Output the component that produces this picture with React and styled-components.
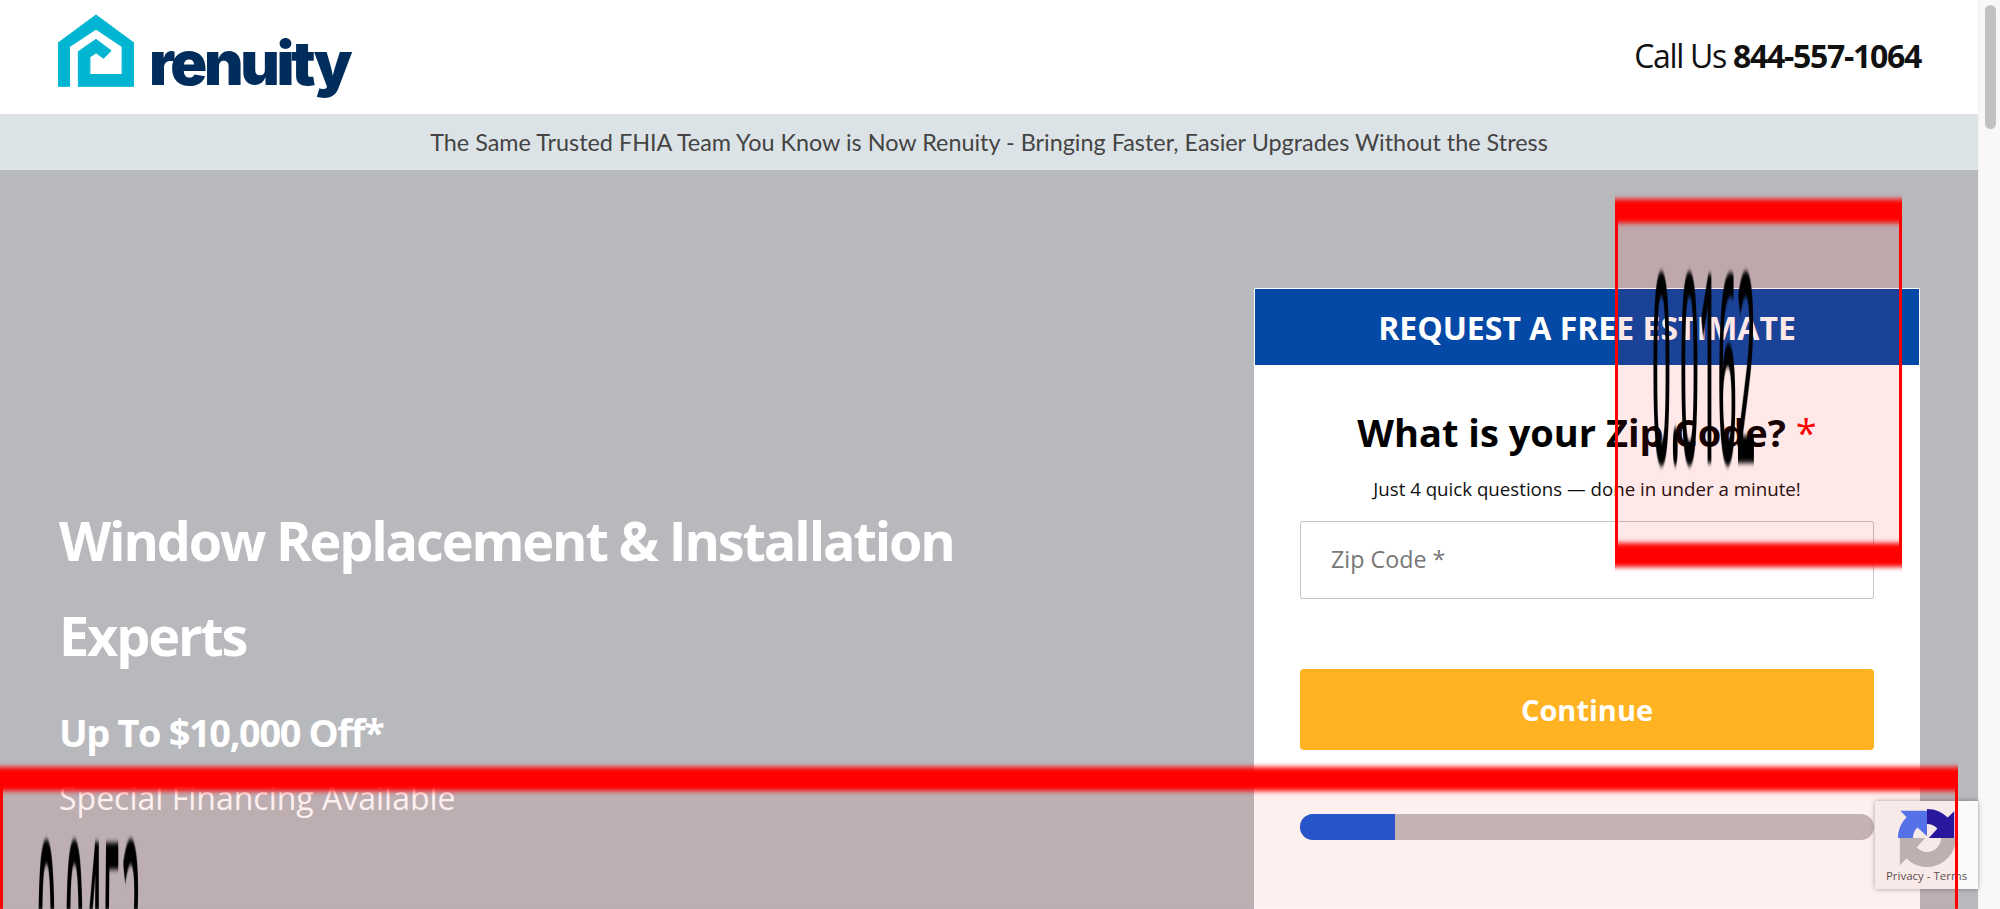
import styled, { createGlobalStyle } from 'styled-components';

const GlobalStyle = createGlobalStyle`
  html, body {
    margin: 0;
    padding: 0;
    height: 100%;
    overflow: hidden;
    background: #fff;
    font-family: "Open Sans", "Liberation Sans", sans-serif;
  }
  * { box-sizing: border-box; }
`;

const Frame = styled.div`
  position: relative;
  display: flex;
  width: 2000px;
  height: 909px;
  overflow: hidden;
`;

const Page = styled.div`
  flex: 1;
  min-width: 0;
  display: flex;
  flex-direction: column;
`;

const Header = styled.header`
  flex-shrink: 0;
  height: 114px;
  padding: 0 57px 0 58px;
  display: flex;
  align-items: center;
  justify-content: space-between;
  background: #fff;
`;

const Logo = styled.div`
  align-self: flex-start;
  display: flex;
  align-items: flex-end;
  gap: 15px;
  height: 73px;
  margin-top: 14px;
`;

const LogoMark = styled.svg`
  width: 76px;
  height: 73px;
`;

const LogoWord = styled.span`
  font-family: Inter, "Liberation Sans", sans-serif;
  font-weight: 900;
  font-size: 61px;
  line-height: 61px;
  letter-spacing: -3.3px;
  color: #002d5c;
  margin-bottom: -7px;
`;

const Phone = styled.div`
  font-size: 32px;
  letter-spacing: -1.3px;
  color: #111;
  margin-top: -4px;

  b {
    font-weight: 700;
  }
`;

const Banner = styled.div`
  flex-shrink: 0;
  height: 56px;
  display: flex;
  align-items: center;
  justify-content: center;
  background: #dce3e6;
  font-family: Lato, "Liberation Sans", sans-serif;
  font-size: 23.4px;
  color: #444;
`;

const Hero = styled.section`
  flex: 1;
  min-height: 0;
  display: flex;
  justify-content: space-between;
  align-items: flex-start;
  padding: 118px 58px 0 59px;
  background: #b8b9bd;
`;

const HeroText = styled.div`
  padding-top: 205px;
  color: #fff;
`;

const HeroTitle = styled.h1`
  margin: 0;
  width: 920px;
  font-size: 54px;
  font-weight: 700;
  line-height: 95px;
  letter-spacing: -2.15px;
`;

const HeroOffer = styled.div`
  margin-top: 23px;
  font-size: 38px;
  font-weight: 700;
  line-height: 52px;
  letter-spacing: -1.4px;
`;

const HeroNote = styled.div`
  margin-top: 18px;
  font-size: 32px;
  line-height: 44px;
  font-weight: 400;
`;

const Card = styled.div`
  width: 666px;
  flex-shrink: 0;
  background: #fff;
  border: 1px solid #fff;
`;

const CardHead = styled.div`
  height: 76px;
  display: flex;
  align-items: center;
  justify-content: center;
  background: #0449a6;
  color: #fff;
  font-size: 32px;
  font-weight: 700;
`;

const CardBody = styled.div`
  padding: 44px 45px 200px;
  display: flex;
  flex-direction: column;
  align-items: stretch;
`;

const Question = styled.h2`
  margin: 0;
  text-align: center;
  font-size: 38px;
  line-height: 46px;
  font-weight: 700;
  color: #000;

  span {
    color: #f00;
    font-weight: 400;
  }
`;

const Hint = styled.p`
  margin: 22px 0 0;
  text-align: center;
  font-size: 18.7px;
  line-height: 24px;
  color: #111;
`;

const ZipField = styled.div`
  margin-top: 20px;
  height: 78px;
  padding: 0 30px 2px;
  display: flex;
  align-items: center;
  border: 1px solid #c4c4c4;
  border-radius: 2px;
  font-size: 23.3px;
  color: #777;
`;

const ContinueButton = styled.button`
  margin-top: 70px;
  height: 81px;
  border: 0;
  border-radius: 4px;
  background: #ffb222;
  color: #fff;
  font-family: inherit;
  font-size: 29px;
  font-weight: 700;
`;

const ProgressTrack = styled.div`
  margin-top: 64px;
  height: 26px;
  border-radius: 13px;
  background: #c0bfbf;
  overflow: hidden;
`;

const ProgressFill = styled.div`
  width: 95px;
  height: 100%;
  background: #1a5ad6;
`;

const ScrollTrack = styled.div`
  width: 22px;
  flex-shrink: 0;
  padding: 5px 4px 0 6px;
  background: #f8f8f8;
  border-left: 1px solid #efefef;
`;

const ScrollThumb = styled.div`
  height: 124px;
  border-radius: 6px;
  background: #c1c1c1;
`;

const Recaptcha = styled.div`
  position: absolute;
  left: 1875px;
  top: 801px;
  width: 103px;
  height: 88px;
  padding-top: 8px;
  display: flex;
  flex-direction: column;
  align-items: center;
  gap: 2px;
  background: #f9f9f9;
  border-radius: 2px 0 0 2px;
  box-shadow: 0 0 5px rgba(0, 0, 0, 0.35);
  font-size: 11.5px;
  line-height: 14px;
  color: #555;
`;

const RecaptchaIcon = styled.svg`
  width: 58px;
  height: 58px;
`;

// stretched debug boxes: drawn flat, then scaled up so they blur like the reference
const DebugBox = styled.div`
  position: absolute;
  left: ${(p) => p.$left}px;
  top: ${(p) => p.$top}px;
  width: ${(p) => p.$width}px;
  height: 45.5px;
  padding: 0.7px 0 0 34px;
  border: 3px solid #f00;
  background: rgba(255, 0, 0, ${(p) => p.$alpha});
  color: #000;
  font-size: 33px;
  font-weight: 600;
  line-height: 34px;
  white-space: nowrap;
  filter: blur(0.3px);
  transform: scaleY(8);
  transform-origin: top left;
  will-change: transform;
`;

export default function App() {
  return (
    <>
      <GlobalStyle />
      <Frame>
        <Page>
          <Header>
            <Logo>
              <LogoMark viewBox="176 45 224 213">
                <path
                  fill="#00b5d1"
                  stroke="#00b5d1"
                  strokeWidth="3"
                  strokeLinejoin="round"
                  d="M288 47 L399 129 V257 H236 V155 L288 119 L332 152 L310 174 L288 158 L270 170 V222 H365 V140 L288 88 L210 140 V257 H177 V129 Z"
                />
              </LogoMark>
              <LogoWord>renuity</LogoWord>
            </Logo>
            <Phone>
              Call Us <b>844-557-1064</b>
            </Phone>
          </Header>
          <Banner>The Same Trusted FHIA Team You Know is Now Renuity - Bringing Faster, Easier Upgrades Without the Stress</Banner>
          <Hero>
            <HeroText>
              <HeroTitle>Window Replacement &amp; Installation Experts</HeroTitle>
              <HeroOffer>Up To $10,000 Off*</HeroOffer>
              <HeroNote>Special Financing Available</HeroNote>
            </HeroText>
            <Card>
              <CardHead>REQUEST A FREE ESTIMATE</CardHead>
              <CardBody>
                <Question>
                  What is your Zip Code? <span>*</span>
                </Question>
                <Hint>Just 4 quick questions — done in under a minute!</Hint>
                <ZipField>Zip Code *</ZipField>
                <ContinueButton>Continue</ContinueButton>
                <ProgressTrack>
                  <ProgressFill />
                </ProgressTrack>
              </CardBody>
            </Card>
          </Hero>
        </Page>
        <ScrollTrack>
          <ScrollThumb />
        </ScrollTrack>
        <Recaptcha>
          <RecaptchaIcon viewBox="0 0 64 64">
            <path fill="#bbb" d="M64 32 A32 32 0 0 1 9.4 54.6 L2 62 V32 H30 L20.5 42.5 C23.5 45.5 27.4 47.5 32 47.5 C40.5 47.5 47.5 40.5 47.5 32 Z" />
            <path fill="#4a7af5" d="M0 32 C0 23 3.6 15 9.5 9.2 L2.5 2 H32 V30 L21.5 20.5 C18.5 23.2 16.5 27.4 16.5 32 Z" />
            <path fill="#1c1aa8" d="M32 0 C41 0 49 3.6 54.8 9.5 L62 2.5 V32 H34 L43.5 21.5 C40.8 18.5 36.6 16.5 32 16.5 Z" />
          </RecaptchaIcon>
          <span>Privacy - Terms</span>
        </Recaptcha>
        <DebugBox $left={1615} $top={199} $width={287} $alpha={0.09}>
          0.0162
        </DebugBox>
        <DebugBox $left={0} $top={767} $width={1958} $alpha={0.06}>
          0.0452
        </DebugBox>
      </Frame>
    </>
  );
}
